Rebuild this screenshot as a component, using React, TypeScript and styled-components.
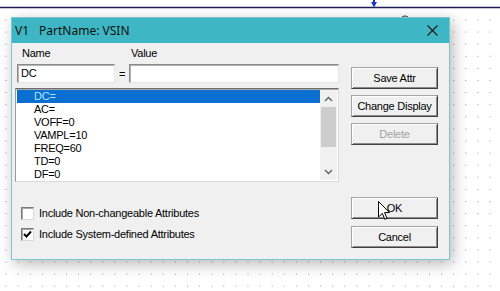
import React from 'react';
import styled, { createGlobalStyle } from 'styled-components';

const GlobalStyle = createGlobalStyle`
  html, body {
    margin: 0;
    padding: 0;
  }
  body {
    width: 500px;
    height: 291px;
    overflow: hidden;
    background: #ffffff;
    font-family: "Liberation Sans", Arial, sans-serif;
  }
  * {
    box-sizing: border-box;
  }
`;

const Canvas = styled.div`
  position: relative;
  width: 500px;
  height: 291px;
  overflow: hidden;
  background: #ffffff;
`;

const Schematic = styled.svg`
  position: absolute;
  left: 0;
  top: 0;
`;

const Dialog = styled.div`
  position: absolute;
  left: 11px;
  top: 17px;
  width: 439px;
  height: 243px;
  border: 1px solid #7cc7cf;
  background: #f0f0f0;
  box-shadow: 3px 4px 14px rgba(0, 0, 0, 0.28);
  display: flex;
  flex-direction: column;
`;

const TitleBar = styled.div`
  height: 25px;
  flex: none;
  background: #3fb6c3;
  display: flex;
  align-items: center;
  gap: 10px;
  padding: 0 11px 1px 3px;
  font-family: "Noto Sans", "Open Sans", sans-serif;
  font-size: 12px;
  color: #101010;
`;

const CloseIcon = styled.svg`
  margin-left: auto;
`;

const Body = styled.div`
  flex: 1;
  display: flex;
  gap: 12px;
  padding: 4px 11px 11px 3px;
  font-size: 11px;
  letter-spacing: -0.25px;
  color: #000;
`;

const LeftColumn = styled.div`
  width: 324px;
  display: flex;
  flex-direction: column;
`;

const RightColumn = styled.div`
  width: 87px;
  display: flex;
  flex-direction: column;
  padding-top: 20px;
`;

const ButtonGroup = styled.div<{ $gap: number; $bottom?: boolean }>`
  display: flex;
  flex-direction: column;
  gap: ${({ $gap }) => $gap}px;
  margin-top: ${({ $bottom }) => ($bottom ? 'auto' : '0')};
`;

const FieldGrid = styled.div`
  display: grid;
  grid-template-columns: 98px 14px 210px;
  margin-left: 2px;
`;

const LabelRow = styled(FieldGrid)`
  height: 13px;
  line-height: 13px;
`;

const FieldLabel = styled.span<{ $indent: number }>`
  padding-left: ${({ $indent }) => $indent}px;
`;

const InputRow = styled(FieldGrid)`
  margin-top: 4px;
  height: 19px;
  align-items: center;
`;

const TextField = styled.div`
  height: 19px;
  background: #ffffff;
  border: 1px solid;
  border-color: #8a8a8a #e6e6e6 #e6e6e6 #8a8a8a;
  box-shadow: inset 1px 1px 0 #b4b4b4;
  padding: 0 3px;
  line-height: 17px;
`;

const Equals = styled.span`
  text-align: center;
`;

const ListBox = styled.div`
  margin-top: 5px;
  height: 94px;
  display: flex;
  background: #ffffff;
  border: 1px solid;
  border-color: #6e6e6e #dadada #dadada #9a9a9a;
  box-shadow: inset 0 1px 0 #a8a8a8;
  padding: 1px;
`;

const Items = styled.div`
  flex: 1;
  overflow: hidden;
`;

const Item = styled.div<{ $selected?: boolean }>`
  height: 13px;
  line-height: 13px;
  padding-left: 17px;
  white-space: nowrap;
  background: ${({ $selected }) => ($selected ? '#0a6fd0' : 'transparent')};
  color: ${({ $selected }) => ($selected ? '#aee6ff' : '#000')};
`;

const ScrollBar = styled.div`
  width: 17px;
  display: flex;
  flex-direction: column;
  background: #f0f0f0;
`;

const ScrollArrow = styled.div`
  height: 17px;
  display: flex;
  align-items: center;
  justify-content: center;
`;

const ScrollThumb = styled.div`
  height: 40px;
  margin: 0 1px;
  background: #cdcdcd;
`;

const ScrollTrack = styled.div`
  flex: 1;
`;

const CheckList = styled.div`
  margin-top: 25px;
  padding-left: 6px;
  display: flex;
  flex-direction: column;
  gap: 8px;
`;

const CheckRow = styled.div`
  display: flex;
  align-items: center;
  gap: 5px;
  height: 13px;
  line-height: 13px;
`;

const CheckLabel = styled.span`
  margin-top: -1px;
`;

const CheckBox = styled.div`
  width: 13px;
  height: 13px;
  background: #ffffff;
  border: 1px solid;
  border-color: #7a7a7a #d8d8d8 #d8d8d8 #7a7a7a;
  box-shadow: inset 1px 1px 0 #a8a8a8;
  display: flex;
  align-items: center;
  justify-content: center;
`;

const Button = styled.div<{ $disabled?: boolean }>`
  height: 22px;
  display: flex;
  align-items: center;
  justify-content: center;
  background: #f0f0f0;
  border: 1px solid;
  border-color: #a5a5a5 #404040 #404040 #a5a5a5;
  box-shadow: inset 1px 1px 0 #ffffff, inset -1px -1px 0 #8c8c8c;
  color: ${({ $disabled }) => ($disabled ? '#a3a3a3' : '#000')};
  white-space: nowrap;
`;

const Cursor = styled.svg`
  position: absolute;
  left: 378px;
  top: 201px;
`;

const items = ['DC=', 'AC=', 'VOFF=0', 'VAMPL=10', 'FREQ=60', 'TD=0', 'DF=0'];

const Chevron: React.FC<{ up?: boolean }> = ({ up }) => (
  <svg width="9" height="6" viewBox="0 0 9 6">
    <polyline
      points={up ? '1,5 4.5,1.5 8,5' : '1,1 4.5,4.5 8,1'}
      fill="none"
      stroke="#606060"
      strokeWidth="1.4"
    />
  </svg>
);

const App: React.FC = () => {
  const step = 12.1;
  return (
    <Canvas>
      <GlobalStyle />
      <Schematic width="500" height="291">
        <defs>
          <pattern id="grid" x={5.5} y={7.4} width={step} height={step} patternUnits="userSpaceOnUse">
            <rect x="0" y="0" width="1" height="1" fill="#999999" />
          </pattern>
        </defs>
        <rect x="0" y="9" width="500" height="282" fill="url(#grid)" />
        <line x1="0" y1="7.5" x2="500" y2="7.5" stroke="#1d1d58" strokeWidth="1.5" />
        <rect x="373" y="0" width="2" height="3" fill="#1f35c4" />
        <polygon points="371,2 377,2 374,7.5" fill="#1f35c4" />
        <circle cx="405" cy="21" r="5" fill="none" stroke="#333" strokeWidth="1" />
      </Schematic>

      <Dialog>
        <TitleBar>
          <span>V1</span>
          <span>PartName: VSIN</span>
          <CloseIcon width="11" height="11" viewBox="0 0 11 11">
            <path d="M0.5 0.5 L10.5 10.5 M10.5 0.5 L0.5 10.5" stroke="#1a1a1a" strokeWidth="1.1" />
          </CloseIcon>
        </TitleBar>
        <Body>
          <LeftColumn>
            <LabelRow>
              <FieldLabel $indent={5}>Name</FieldLabel>
              <span />
              <FieldLabel $indent={2}>Value</FieldLabel>
            </LabelRow>
            <InputRow>
              <TextField>DC</TextField>
              <Equals>=</Equals>
              <TextField />
            </InputRow>
            <ListBox>
              <Items>
                {items.map((item, i) => (
                  <Item key={item} $selected={i === 0}>
                    {item}
                  </Item>
                ))}
              </Items>
              <ScrollBar>
                <ScrollArrow>
                  <Chevron up />
                </ScrollArrow>
                <ScrollThumb />
                <ScrollTrack />
                <ScrollArrow>
                  <Chevron />
                </ScrollArrow>
              </ScrollBar>
            </ListBox>
            <CheckList>
              <CheckRow>
                <CheckBox />
                <CheckLabel>Include Non-changeable Attributes</CheckLabel>
              </CheckRow>
              <CheckRow>
                <CheckBox>
                  <svg width="9" height="9" viewBox="0 0 9 9">
                    <polyline points="1,4 3.5,6.5 8,1.5" fill="none" stroke="#000" strokeWidth="2" />
                  </svg>
                </CheckBox>
                <CheckLabel>Include System-defined Attributes</CheckLabel>
              </CheckRow>
            </CheckList>
          </LeftColumn>
          <RightColumn>
            <ButtonGroup $gap={6}>
              <Button>Save Attr</Button>
              <Button>Change Display</Button>
              <Button $disabled>Delete</Button>
            </ButtonGroup>
            <ButtonGroup $gap={7} $bottom>
              <Button>OK</Button>
              <Button>Cancel</Button>
            </ButtonGroup>
          </RightColumn>
        </Body>
      </Dialog>

      <Cursor width="13" height="20" viewBox="0 0 13 20">
        <path
          d="M0.5 0.5 L0.5 16 L4.3 12.4 L6.8 18.3 L9 17.4 L6.6 11.6 L11.5 11.6 Z"
          fill="#ffffff"
          stroke="#000000"
          strokeWidth="1"
          strokeLinejoin="round"
        />
      </Cursor>
    </Canvas>
  );
};

export default App;
